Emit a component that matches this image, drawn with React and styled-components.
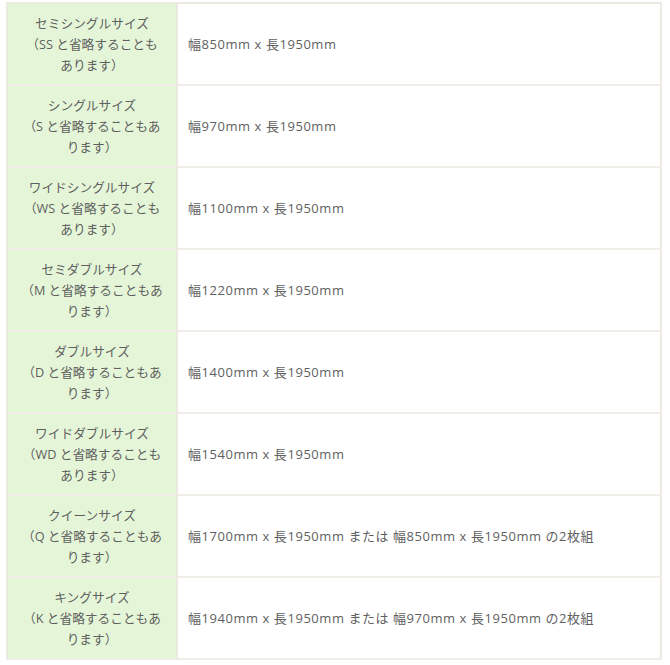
import React from "react";
import styled, { createGlobalStyle } from "styled-components";

const Global = createGlobalStyle`
  html, body { margin: 0; padding: 0; background: #ffffff; }
  body { font-family: "Open Sans", "Noto Sans CJK JP", sans-serif; }
`;

const Page = styled.div`
  padding: 2px 8px 0 6px;
`;

const Table = styled.table`
  width: 656px;
  border-collapse: collapse;
  border: 2px solid #ebe9e0;
  font-size: 12.7px;
  color: #5f5f5f;
`;

const Row = styled.tr`
  height: 82px;
  border-bottom: 2px solid #efede6;
`;

const Head = styled.th`
  width: 168px;
  background: #e5f6d8;
  font-weight: normal;
  text-align: center;
  line-height: 21px;
  padding: 0;
  border-right: 2px solid #ebe9e0;
`;

const Cell = styled.td`
  text-align: left;
  font-size: 13px;
  letter-spacing: 0.55px;
  line-height: 21px;
  padding: 0 0 0 10px;
  background: #ffffff;
`;

const Line = styled.span`
  display: block;
`;

const rows = [
  ["セミシングルサイズ", "（SS と省略することも", "あります）", "幅850mm x 長1950mm"],
  ["シングルサイズ", "（S と省略することもあ", "ります）", "幅970mm x 長1950mm"],
  ["ワイドシングルサイズ", "（WS と省略することも", "あります）", "幅1100mm x 長1950mm"],
  ["セミダブルサイズ", "（M と省略することもあ", "ります）", "幅1220mm x 長1950mm"],
  ["ダブルサイズ", "（D と省略することもあ", "ります）", "幅1400mm x 長1950mm"],
  ["ワイドダブルサイズ", "（WD と省略することも", "あります）", "幅1540mm x 長1950mm"],
  ["クイーンサイズ", "（Q と省略することもあ", "ります）", "幅1700mm x 長1950mm または 幅850mm x 長1950mm の2枚組"],
  ["キングサイズ", "（K と省略することもあ", "ります）", "幅1940mm x 長1950mm または 幅970mm x 長1950mm の2枚組"],
];

export default function App() {
  return (
    <>
      <Global />
      <Page>
        <Table>
          <tbody>
            {rows.map((r) => (
              <Row key={r[0]}>
                <Head>
                  <Line>{r[0]}</Line>
                  <Line>{r[1]}</Line>
                  <Line>{r[2]}</Line>
                </Head>
                <Cell>{r[3]}</Cell>
              </Row>
            ))}
          </tbody>
        </Table>
      </Page>
    </>
  );
}
